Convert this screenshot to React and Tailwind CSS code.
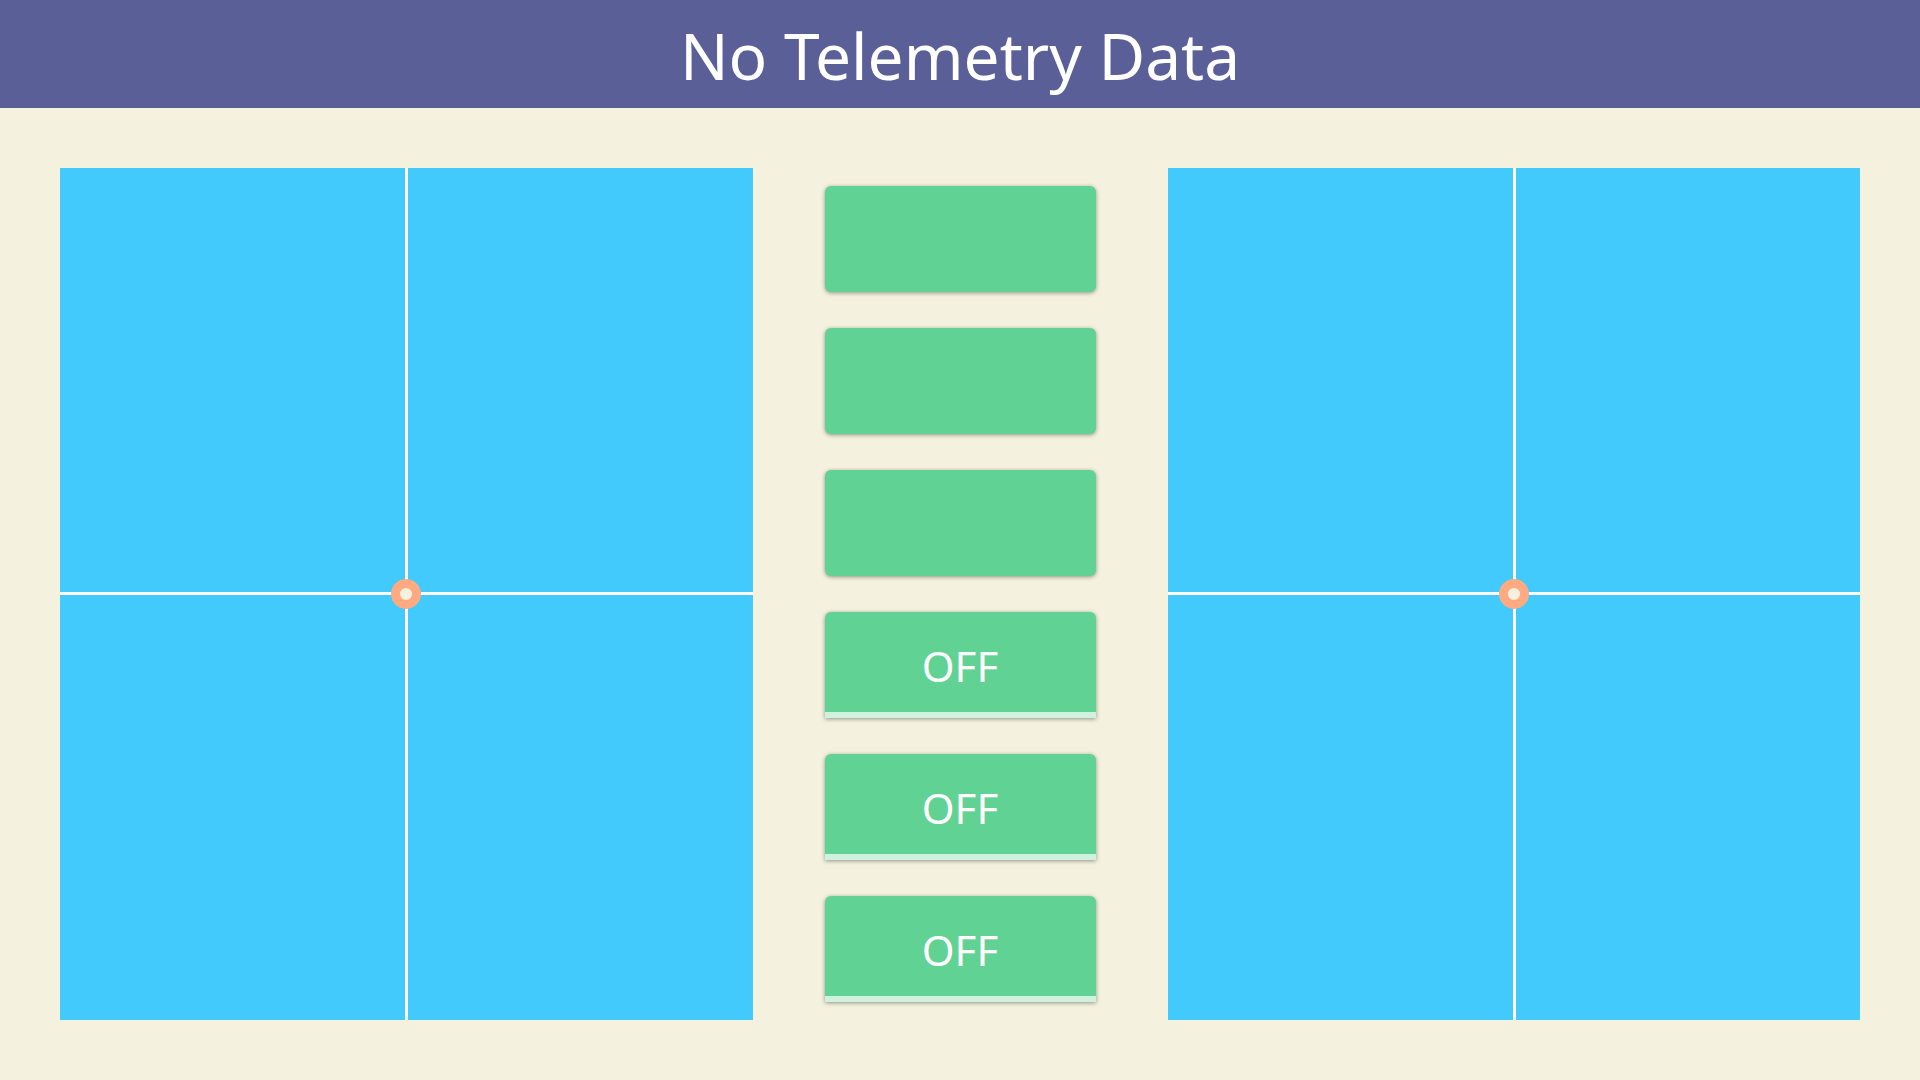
const toggles = [
  { id: 1, label: "", checkable: false },
  { id: 2, label: "", checkable: false },
  { id: 3, label: "", checkable: false },
  { id: 4, label: "OFF", checkable: true },
  { id: 5, label: "OFF", checkable: true },
  { id: 6, label: "OFF", checkable: true },
];

function Joystick() {
  return (
    <div className="relative flex-1 bg-[#42cafd]">
      <div className="absolute inset-y-0 left-1/2 -ml-px w-[3px] bg-white" />
      <div className="absolute inset-x-0 top-1/2 -mt-0.5 h-[3px] bg-white" />
      <div className="absolute top-1/2 left-1/2 size-[30px] -translate-1/2 rounded-full border-9 border-[#ffaa80] bg-[#f4f1de]" />
    </div>
  );
}

function PadButton({ label, checkable, id }) {
  return (
    <button
      type="button"
      aria-label={label ? undefined : `Button ${id}`}
      className={`relative flex flex-1 items-center justify-center bg-[#60d394] text-[42px] text-white shadow-[0_1px_4px_rgba(0,0,0,0.4)] ${
        checkable ? "rounded-t-md" : "rounded-md"
      }`}
    >
      {label}
      {checkable && <span className="absolute inset-x-0 bottom-0 h-1.5 bg-[#cff2de]" />}
    </button>
  );
}

export default function App() {
  return (
    <div className="flex h-screen flex-col bg-[#f4f1de] font-['Noto_Sans',sans-serif]">
      <header className="flex h-27 items-center justify-center bg-[#5b5f97] pt-1">
        <h1 className="text-[64px] leading-none text-white">No Telemetry Data</h1>
      </header>
      <main className="flex flex-1 p-15">
        <Joystick />
        <div className="mx-18 my-[18px] flex w-[271px] flex-col gap-9">
          {toggles.map((t) => (
            <PadButton key={t.id} {...t} />
          ))}
        </div>
        <Joystick />
      </main>
    </div>
  );
}
